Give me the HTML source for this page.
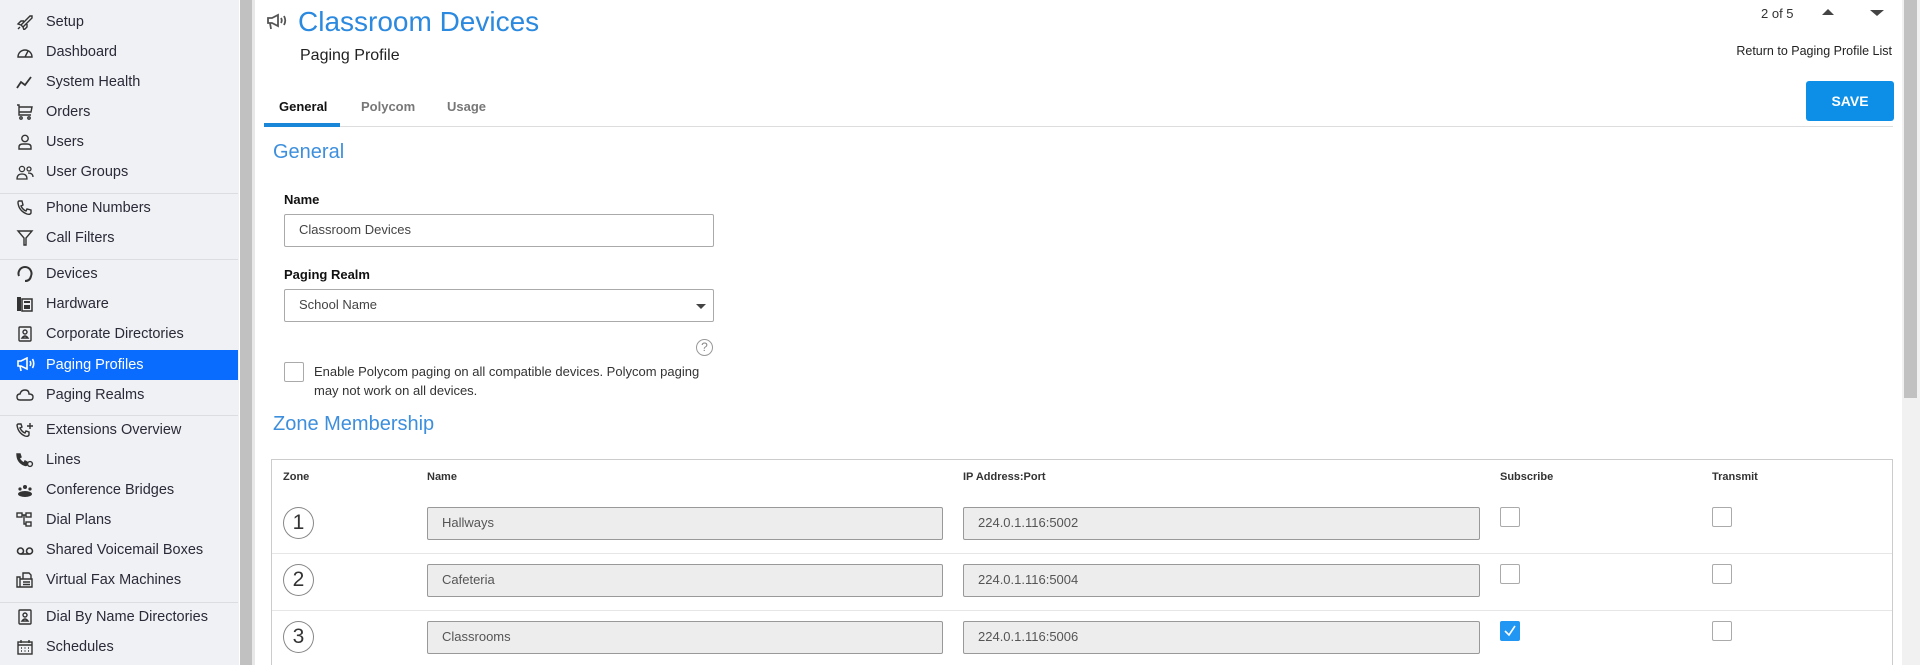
<!DOCTYPE html>
<html style="width:1920px;height:665px;overflow:hidden"><head><meta charset="utf-8"><style>
*{box-sizing:border-box;margin:0;padding:0}
body{width:1920px;height:665px;overflow:hidden;background:#fff;font-family:"Liberation Sans",Arial,sans-serif;position:relative;color:#333}
.sb{position:absolute;left:0;top:0;width:239px;height:665px;background:#f0f1f4}
.it{position:absolute;left:0;width:238px;height:30px;font-size:14.5px;color:#2a2a38;line-height:30px;padding-left:46px}
.it svg{position:absolute;left:16px;top:7px}
.it.act{background:#0a6cff;color:#fff}
.sep{position:absolute;left:0;width:238px;height:1px;background:#dcdde0}
.gb{position:absolute;left:240px;top:0;width:12px;height:665px;background:#c1c1c1}
.gl{position:absolute;left:252px;top:0;width:3px;height:665px;background:#e8e8e8}
.rs{position:absolute;left:1902px;top:0;width:18px;height:665px;background:#f1f1f1}
.rt{position:absolute;left:1904px;top:0;width:13px;height:398px;background:#c1c1c1}
.abs{position:absolute;white-space:nowrap}
.inp{position:absolute;border:1px solid #aaa;border-radius:2px;font-size:13px;color:#444;line-height:30px;padding-left:14px;background:#fff}
.ro{background:#ededed;border-color:#999;color:#555}
.cb{position:absolute;width:20px;height:20px;border:1px solid #aaa;border-radius:2px;background:#fff}
.th{position:absolute;top:471px;font-size:11px;font-weight:bold;color:#333}
.circ{position:absolute;width:31px;height:32px;border:1px solid #888;border-radius:50%;text-align:center;line-height:30px;font-size:21px;color:#333}
</style></head><body>
<div class="sb">
<div class="it" style="top:7px"><svg width="18" height="16" viewBox="0 0 18 16" fill="none" stroke="#333" stroke-width="1.4"><path d="M5 11 L14 2 L16 2 L16 4 L7 13 Z M5 11 L2 10 L5 7 L8 7 M7 13 L8 16 L11 13 L11 10 M2 15 L4 13"/></svg>Setup</div>
<div class="it" style="top:37px"><svg width="18" height="16" viewBox="0 0 18 16" fill="none" stroke="#333" stroke-width="1.4"><path d="M2 13 A7 7 0 1 1 16 13 Z M9 13 L12 7"/></svg>Dashboard</div>
<div class="it" style="top:67px"><svg width="18" height="16" viewBox="0 0 18 16" fill="none" stroke="#333" stroke-width="1.8"><path d="M1 14 L5 8 L9 11 L15 3"/></svg>System Health</div>
<div class="it" style="top:97px"><svg width="18" height="16" viewBox="0 0 18 16" fill="none" stroke="#333" stroke-width="1.4"><path d="M1 1 L3 1 L3 11 L15 11 M3 3 L16 3 L15 8 L3 8"/><circle cx="5" cy="14" r="1.2"/><circle cx="13" cy="14" r="1.2"/></svg>Orders</div>
<div class="it" style="top:127px"><svg width="18" height="16" viewBox="0 0 18 16" fill="none" stroke="#333" stroke-width="1.4"><circle cx="9" cy="4.5" r="3.2"/><path d="M3 15 L3 13 Q3 10 7 10 L11 10 Q15 10 15 13 L15 15 Z"/></svg>Users</div>
<div class="it" style="top:157px"><svg width="18" height="16" viewBox="0 0 18 16" fill="none" stroke="#333" stroke-width="1.3"><circle cx="6" cy="5" r="2.6"/><circle cx="13" cy="5" r="2"/><path d="M1 15 Q1 10 6 10 Q11 10 11 15 Z M12 9 Q17 9 17 13"/></svg>User Groups</div>
<div class="sep" style="top:193px"></div>
<div class="it" style="top:193px"><svg width="18" height="16" viewBox="0 0 18 16" fill="none" stroke="#333" stroke-width="1.4"><path d="M3 1 L6 1 L7 5 L5 6 Q7 10 10 11 L11 9 L15 10 L15 13 Q14 15 11 14 Q3 11 2 3 Q2 1 3 1Z"/></svg>Phone Numbers</div>
<div class="it" style="top:223px"><svg width="18" height="16" viewBox="0 0 18 16" fill="none" stroke="#333" stroke-width="1.4"><path d="M2 1 L16 1 L10 8 L10 15 L8 15 L8 8 Z"/></svg>Call Filters</div>
<div class="sep" style="top:259px"></div>
<div class="it" style="top:259px"><svg width="18" height="16" viewBox="0 0 18 16" fill="none" stroke="#333" stroke-width="2"><path d="M3 10 A6.5 6.5 0 1 1 15 10 M15 10 Q14 15 9 15"/></svg>Devices</div>
<div class="it" style="top:289px"><svg width="18" height="16" viewBox="0 0 18 16" fill="#333"><rect x="1" y="1" width="4" height="14"/><rect x="6" y="3" width="10" height="12" fill="none" stroke="#333" stroke-width="1.5"/><rect x="8" y="5" width="6" height="2"/><rect x="8" y="9" width="6" height="4"/></svg>Hardware</div>
<div class="it" style="top:319px"><svg width="18" height="16" viewBox="0 0 18 16" fill="none" stroke="#333" stroke-width="1.4"><rect x="3" y="1" width="12" height="14" rx="1"/><circle cx="9" cy="6" r="2"/><path d="M6 12 Q9 8 12 12 Z"/></svg>Corporate Directories</div>
<div class="it act" style="top:350px"><svg width="20" height="16" viewBox="0 0 20 16" fill="none" stroke="#fff" stroke-width="1.6"><path d="M2 4 L5 4 L11 1 L11 12 L5 9 L2 9 Z M4 9 L5 14 M14 4 Q15.5 6.5 14 9 M16.5 2 Q19 6.5 16.5 11"/></svg>Paging Profiles</div>
<div class="it" style="top:380px"><svg width="18" height="16" viewBox="0 0 18 16" fill="none" stroke="#333" stroke-width="1.4"><path d="M4 13 Q1 13 1 10 Q1 7 4 7 Q5 3 9 3 Q13 3 13 7 Q17 7 17 10 Q17 13 14 13 Z"/></svg>Paging Realms</div>
<div class="sep" style="top:415px"></div>
<div class="it" style="top:415px"><svg width="18" height="16" viewBox="0 0 18 16" fill="none" stroke="#333" stroke-width="1.4"><path d="M2 2 L5 2 L6 5 L4 6 Q6 10 9 11 L10 9 L13 10 L13 13 Q12 15 9 14 Q2 11 1 3Z M14 1 L14 7 M11 4 L17 4"/></svg>Extensions Overview</div>
<div class="it" style="top:445px"><svg width="18" height="16" viewBox="0 0 18 16" fill="none" stroke="#333" stroke-width="1.4"><path d="M1 2 L4 2 L5 5 L3 6 Q5 10 8 11 L9 9 L11 10 L11 13 Q10 14 8 13 Q1 10 1 2Z" fill="#333"/><circle cx="14" cy="12" r="2.4"/></svg>Lines</div>
<div class="it" style="top:475px"><svg width="18" height="16" viewBox="0 0 18 16" fill="#333"><circle cx="9" cy="5" r="2"/><circle cx="4" cy="7" r="1.6"/><circle cx="14" cy="7" r="1.6"/><ellipse cx="9" cy="12" rx="7" ry="3"/></svg>Conference Bridges</div>
<div class="it" style="top:505px"><svg width="18" height="16" viewBox="0 0 18 16" fill="none" stroke="#333" stroke-width="1.4"><rect x="1" y="1" width="5" height="4"/><rect x="10" y="1" width="5" height="4"/><rect x="10" y="10" width="5" height="4"/><path d="M6 3 L10 3 M8 3 L8 12 L10 12"/></svg>Dial Plans</div>
<div class="it" style="top:535px"><svg width="18" height="16" viewBox="0 0 18 16" fill="none" stroke="#333" stroke-width="1.6"><circle cx="4.5" cy="9" r="3"/><circle cx="13.5" cy="9" r="3"/><path d="M4.5 12 L13.5 12"/></svg>Shared Voicemail Boxes</div>
<div class="it" style="top:565px"><svg width="18" height="16" viewBox="0 0 18 16" fill="none" stroke="#333" stroke-width="1.4"><path d="M1 5 L4 5 L4 15 L1 15 Z M4 7 L16 7 L16 15 L4 15 M7 7 L7 1 L13 1 L15 3 L15 7"/><path d="M7 10 L14 10 M7 12.5 L14 12.5"/></svg>Virtual Fax Machines</div>
<div class="sep" style="top:602px"></div>
<div class="it" style="top:602px"><svg width="18" height="16" viewBox="0 0 18 16" fill="none" stroke="#333" stroke-width="1.4"><rect x="3" y="1" width="12" height="14" rx="1"/><circle cx="9" cy="6" r="2"/><path d="M6 12 Q9 8 12 12 Z"/></svg>Dial By Name Directories</div>
<div class="it" style="top:632px"><svg width="18" height="16" viewBox="0 0 18 16" fill="none" stroke="#333" stroke-width="1.4"><rect x="2" y="3" width="14" height="12"/><path d="M2 6 L16 6 M5 1 L5 4 M13 1 L13 4 M5 9 h1 M8.5 9 h1 M12 9 h1 M5 12 h1 M8.5 12 h1 M12 12 h1"/></svg>Schedules</div>
</div>
<div class="gb"></div><div class="gl"></div>
<div class="rs"></div><div class="rt"></div>

<svg class="abs" style="left:266px;top:13px" width="22" height="18" viewBox="0 0 22 18" fill="none" stroke="#555" stroke-width="1.8"><path d="M2 5 L6 5 L12 2 L12 13 L6 10 L2 10 Z M4 10 L5 16 M15 5 Q16.5 7.5 15 10 M18 3 Q20.5 7.5 18 12"/></svg>
<div class="abs" style="left:298px;top:6px;font-size:28px;color:#2b89df">Classroom Devices</div>
<div class="abs" style="left:300px;top:47px;font-size:16px;color:#222">Paging Profile</div>
<div class="abs" style="left:1761px;top:6px;font-size:13px;color:#333">2 of 5</div>
<div class="abs" style="left:1822px;top:9px;width:0;height:0;border-left:6px solid transparent;border-right:6px solid transparent;border-bottom:6px solid #444"></div>
<div class="abs" style="left:1870px;top:10px;width:0;height:0;border-left:7px solid transparent;border-right:7px solid transparent;border-top:6px solid #444"></div>
<div class="abs" style="right:28px;top:44px;font-size:12.5px;color:#222">Return to Paging Profile List</div>
<div class="abs" style="left:1806px;top:81px;width:88px;height:40px;background:#0d8fe8;border-radius:3px;color:#fff;font-weight:bold;font-size:14px;text-align:center;line-height:40px">SAVE</div>

<div class="abs" style="left:264px;top:126px;width:1629px;height:1px;background:#ddd"></div>
<div class="abs" style="left:264px;top:123px;width:76px;height:4px;background:#1a86d8"></div>
<div class="abs" style="left:279px;top:99px;font-size:13px;font-weight:bold;color:#111">General</div>
<div class="abs" style="left:361px;top:99px;font-size:13px;font-weight:bold;color:#777">Polycom</div>
<div class="abs" style="left:447px;top:99px;font-size:13px;font-weight:bold;color:#777">Usage</div>

<div class="abs" style="left:273px;top:141px;font-size:20px;color:#3d8fdd">General</div>
<div class="abs" style="left:284px;top:192px;font-size:13px;font-weight:bold;color:#111">Name</div>
<div class="inp" style="left:284px;top:214px;width:430px;height:33px">Classroom Devices</div>
<div class="abs" style="left:284px;top:267px;font-size:13px;font-weight:bold;color:#111">Paging Realm</div>
<div class="inp" style="left:284px;top:289px;width:430px;height:33px">School Name</div>
<div class="abs" style="left:696px;top:304px;width:0;height:0;border-left:5px solid transparent;border-right:5px solid transparent;border-top:5px solid #444"></div>
<div class="abs" style="left:696px;top:339px;width:17px;height:17px;border:1.5px solid #999;border-radius:50%;font-size:12px;color:#888;text-align:center;line-height:14px">?</div>
<div class="cb" style="left:284px;top:362px"></div>
<div class="abs" style="left:314px;top:362px;font-size:13px;color:#333;line-height:19px">Enable Polycom paging on all compatible devices. Polycom paging<br>may not work on all devices.</div>
<div class="abs" style="left:273px;top:413px;font-size:20px;color:#3d8fdd">Zone Membership</div>

<div class="abs" style="left:271px;top:459px;width:1622px;height:206px;border:1px solid #ccc;border-bottom:none"></div>
<div class="th" style="left:283px">Zone</div>
<div class="th" style="left:427px">Name</div>
<div class="th" style="left:963px">IP Address:Port</div>
<div class="th" style="left:1500px">Subscribe</div>
<div class="th" style="left:1712px">Transmit</div>
<div class="abs" style="left:272px;top:553px;width:1620px;height:1px;background:#e6e6e6"></div>
<div class="abs" style="left:272px;top:610px;width:1620px;height:1px;background:#e6e6e6"></div>

<div class="circ" style="left:283px;top:507px">1</div>
<div class="inp ro" style="left:427px;top:507px;width:516px;height:33px">Hallways</div>
<div class="inp ro" style="left:963px;top:507px;width:517px;height:33px">224.0.1.116:5002</div>
<div class="cb" style="left:1500px;top:507px"></div>
<div class="cb" style="left:1712px;top:507px"></div>

<div class="circ" style="left:283px;top:564px">2</div>
<div class="inp ro" style="left:427px;top:564px;width:516px;height:33px">Cafeteria</div>
<div class="inp ro" style="left:963px;top:564px;width:517px;height:33px">224.0.1.116:5004</div>
<div class="cb" style="left:1500px;top:564px"></div>
<div class="cb" style="left:1712px;top:564px"></div>

<div class="circ" style="left:283px;top:621px">3</div>
<div class="inp ro" style="left:427px;top:621px;width:516px;height:33px">Classrooms</div>
<div class="inp ro" style="left:963px;top:621px;width:517px;height:33px">224.0.1.116:5006</div>
<div class="cb" style="left:1500px;top:621px;background:#2196f3;border-color:#2196f3"><svg width="18" height="18" viewBox="0 0 18 18" fill="none" stroke="#fff" stroke-width="1.6"><path d="M4 9 L8 13 L14 4"/></svg></div>
<div class="cb" style="left:1712px;top:621px"></div>
</body></html>
